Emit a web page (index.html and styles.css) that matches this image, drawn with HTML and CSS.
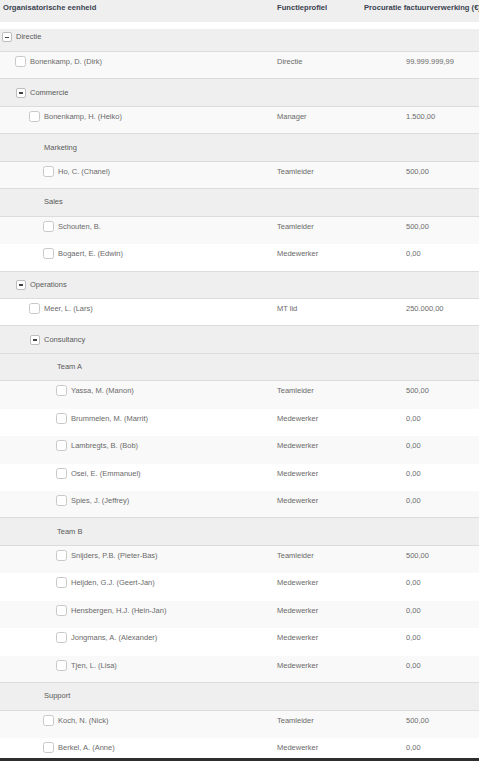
FILE: index.html
```html
<!DOCTYPE html>
<html lang="nl">
<head>
    <meta charset="UTF-8">
    <meta name="viewport" content="width=device-width, initial-scale=1.0">
    <title>Procuratie - Organisatie</title>
    <link rel="stylesheet" href="styles.css">
</head>
<body>
    <div class="viewport">
        <div class="tree">
            <div class="tree-head">
                <div class="cell">Organisatorische eenheid</div>
                <div class="cell">Functieprofiel</div>
                <div class="cell">Procuratie factuurverwerking (€)</div>
            </div>

            <div class="row group first lvl-0">
                <div class="cell name"><span class="toggle"></span>Directie</div>
                <div class="cell"></div>
                <div class="cell"></div>
            </div>
            <div class="row person lvl-0 end">
                <div class="cell name"><span class="check"></span>Bonenkamp, D. (Dirk)</div>
                <div class="cell">Directie</div>
                <div class="cell amount">99.999.999,99</div>
            </div>

            <div class="row group lvl-1">
                <div class="cell name"><span class="toggle"></span>Commercie</div>
                <div class="cell"></div>
                <div class="cell"></div>
            </div>
            <div class="row person lvl-1 end">
                <div class="cell name"><span class="check"></span>Bonenkamp, H. (Heiko)</div>
                <div class="cell">Manager</div>
                <div class="cell amount">1.500,00</div>
            </div>

            <div class="row group lvl-2">
                <div class="cell name"><span class="toggle leaf"></span>Marketing</div>
                <div class="cell"></div>
                <div class="cell"></div>
            </div>
            <div class="row person lvl-2 end">
                <div class="cell name"><span class="check"></span>Ho, C. (Chanel)</div>
                <div class="cell">Teamleider</div>
                <div class="cell amount">500,00</div>
            </div>

            <div class="row group lvl-2">
                <div class="cell name"><span class="toggle leaf"></span>Sales</div>
                <div class="cell"></div>
                <div class="cell"></div>
            </div>
            <div class="row person lvl-2">
                <div class="cell name"><span class="check"></span>Schouten, B.</div>
                <div class="cell">Teamleider</div>
                <div class="cell amount">500,00</div>
            </div>
            <div class="row person lvl-2 end">
                <div class="cell name"><span class="check"></span>Bogaert, E. (Edwin)</div>
                <div class="cell">Medewerker</div>
                <div class="cell amount">0,00</div>
            </div>

            <div class="row group lvl-1">
                <div class="cell name"><span class="toggle"></span>Operations</div>
                <div class="cell"></div>
                <div class="cell"></div>
            </div>
            <div class="row person lvl-1 end">
                <div class="cell name"><span class="check"></span>Meer, L. (Lars)</div>
                <div class="cell">MT lid</div>
                <div class="cell amount">250.000,00</div>
            </div>

            <div class="row group lvl-2">
                <div class="cell name"><span class="toggle"></span>Consultancy</div>
                <div class="cell"></div>
                <div class="cell"></div>
            </div>

            <div class="row group lvl-3">
                <div class="cell name"><span class="toggle leaf"></span>Team A</div>
                <div class="cell"></div>
                <div class="cell"></div>
            </div>
            <div class="row person lvl-3">
                <div class="cell name"><span class="check"></span>Yassa, M. (Manon)</div>
                <div class="cell">Teamleider</div>
                <div class="cell amount">500,00</div>
            </div>
            <div class="row person lvl-3">
                <div class="cell name"><span class="check"></span>Brummelen, M. (Marrit)</div>
                <div class="cell">Medewerker</div>
                <div class="cell amount">0,00</div>
            </div>
            <div class="row person lvl-3">
                <div class="cell name"><span class="check"></span>Lambregts, B. (Bob)</div>
                <div class="cell">Medewerker</div>
                <div class="cell amount">0,00</div>
            </div>
            <div class="row person lvl-3">
                <div class="cell name"><span class="check"></span>Osei, E. (Emmanuel)</div>
                <div class="cell">Medewerker</div>
                <div class="cell amount">0,00</div>
            </div>
            <div class="row person lvl-3 end">
                <div class="cell name"><span class="check"></span>Spies, J. (Jeffrey)</div>
                <div class="cell">Medewerker</div>
                <div class="cell amount">0,00</div>
            </div>

            <div class="row group lvl-3">
                <div class="cell name"><span class="toggle leaf"></span>Team B</div>
                <div class="cell"></div>
                <div class="cell"></div>
            </div>
            <div class="row person lvl-3">
                <div class="cell name"><span class="check"></span>Snijders, P.B. (Pieter-Bas)</div>
                <div class="cell">Teamleider</div>
                <div class="cell amount">500,00</div>
            </div>
            <div class="row person lvl-3">
                <div class="cell name"><span class="check"></span>Heijden, G.J. (Geert-Jan)</div>
                <div class="cell">Medewerker</div>
                <div class="cell amount">0,00</div>
            </div>
            <div class="row person lvl-3">
                <div class="cell name"><span class="check"></span>Hensbergen, H.J. (Hein-Jan)</div>
                <div class="cell">Medewerker</div>
                <div class="cell amount">0,00</div>
            </div>
            <div class="row person lvl-3">
                <div class="cell name"><span class="check"></span>Jongmans, A. (Alexander)</div>
                <div class="cell">Medewerker</div>
                <div class="cell amount">0,00</div>
            </div>
            <div class="row person lvl-3 end">
                <div class="cell name"><span class="check"></span>Tjen, L. (Lisa)</div>
                <div class="cell">Medewerker</div>
                <div class="cell amount">0,00</div>
            </div>

            <div class="row group lvl-2">
                <div class="cell name"><span class="toggle leaf"></span>Support</div>
                <div class="cell"></div>
                <div class="cell"></div>
            </div>
            <div class="row person lvl-2">
                <div class="cell name"><span class="check"></span>Koch, N. (Nick)</div>
                <div class="cell">Teamleider</div>
                <div class="cell amount">500,00</div>
            </div>
            <div class="row person lvl-2">
                <div class="cell name"><span class="check"></span>Berkel, A. (Anne)</div>
                <div class="cell">Medewerker</div>
                <div class="cell amount">0,00</div>
            </div>
        </div>
    </div>
</body>
</html>
```

FILE: styles.css
```css
html, body {
    margin: 0;
    padding: 0;
    background-color: white;
}

body {
    font-family: 'Liberation Sans', Arial, sans-serif;
    font-size: 7.5px;
    color: #6a6a6a;
}

.viewport {
    width: 479px;
    height: 758px;
    overflow: hidden;
    border-bottom: 3px solid #2e2e2e;
}

.tree {
    width: 530px;
    white-space: nowrap;
}

.tree-head,
.row {
    display: grid;
    grid-template-columns: 274px 87px 1fr;
    box-sizing: border-box;
}

.cell {
    padding-left: 3px;
    line-height: 10px;
    overflow: hidden;
}

/* header */
.tree-head {
    height: 22px;
    margin-bottom: 7px;
    background-color: #efefef;
    color: #3a4350;
    font-weight: bold;
    font-size: 7.6px;
}

.tree-head .cell {
    padding-top: 3px;
}

/* rows */
.row {
    height: 27.44px;
    border-bottom: 1px solid transparent;
}

.row:nth-child(odd) {
    background-color: #f9f9f9;
}

.row.end {
    border-bottom-color: #dcdcdc;
}

.row .cell {
    display: flex;
    align-items: center;
}

.person .cell {
    align-items: flex-start;
    padding-top: 4px;
    line-height: 11px;
}

.group {
    background-color: #efefef !important;
    border-bottom-color: #dcdcdc;
    color: #5a5a5a;
}

.group.first {
    height: 23px;
}

.group.first .cell {
    align-items: flex-start;
    padding-top: 3px;
}

.amount {
    padding-left: 45px !important;
}

/* indentation per level */
.group.lvl-0 .name { padding-left: 2px; }
.group.lvl-1 .name { padding-left: 16px; }
.group.lvl-2 .name { padding-left: 30px; }
.group.lvl-3 .name { padding-left: 43px; }

.person.lvl-0 .name { padding-left: 15px; }
.person.lvl-1 .name { padding-left: 29px; }
.person.lvl-2 .name { padding-left: 43px; }
.person.lvl-3 .name { padding-left: 56px; }

/* toggle (minus) */
.toggle {
    position: relative;
    width: 10px;
    height: 10px;
    margin-right: 4px;
    box-sizing: border-box;
    border: 1px solid #bdbdbd;
    border-radius: 2px;
    background-color: white;
    flex-shrink: 0;
}

.toggle::after {
    content: '';
    position: absolute;
    left: 2px;
    top: 3.5px;
    width: 4px;
    height: 1.5px;
    background-color: #444;
}

.toggle.leaf {
    visibility: hidden;
}

/* checkbox */
.check {
    width: 11px;
    height: 11px;
    margin-right: 4px;
    box-sizing: border-box;
    border: 1px solid #c8c8c8;
    border-radius: 2.5px;
    background-color: white;
    flex-shrink: 0;
}
```
